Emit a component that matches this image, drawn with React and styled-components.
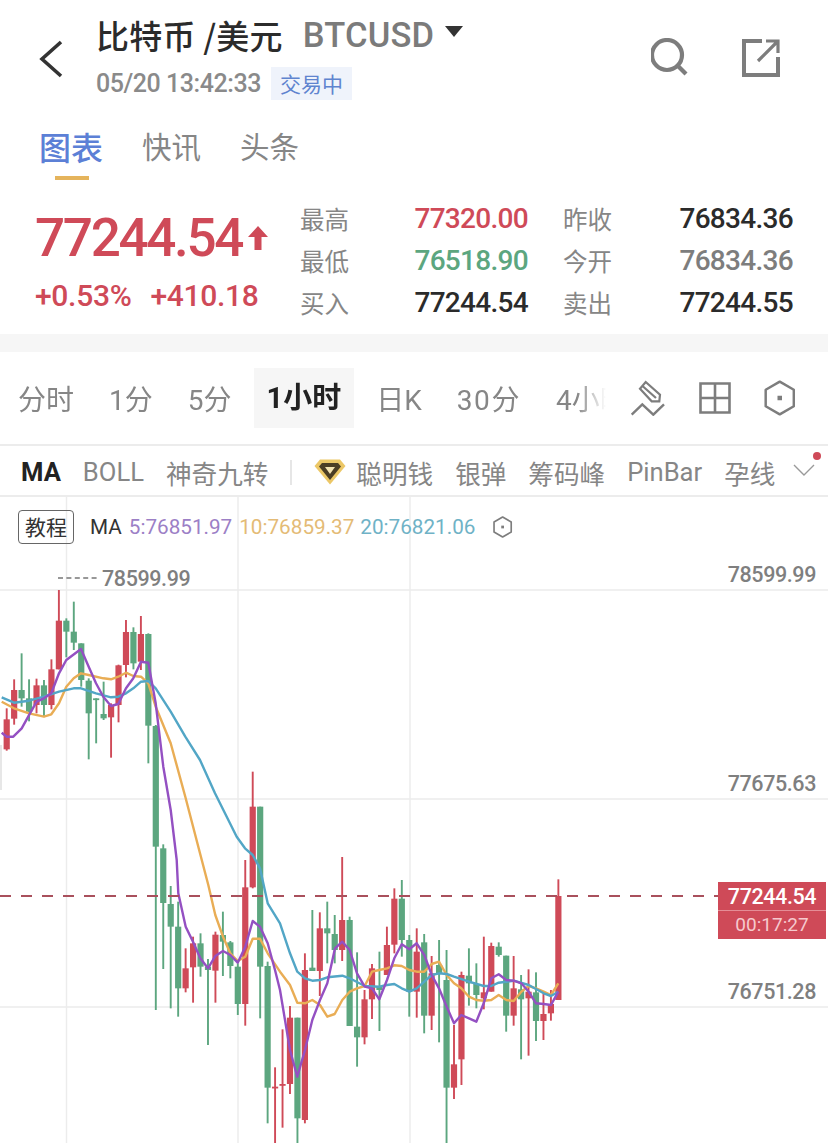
import React from 'react';
import styled, {createGlobalStyle} from 'styled-components';

const RED = '#cf4a58';
const GREEN = '#5ca67f';
const NUM = `Roboto, "Noto Sans CJK SC", sans-serif`;
const CJK = `"Noto Sans CJK SC", Roboto, sans-serif`;

const Global = createGlobalStyle`
	html, body {
		margin: 0;
		padding: 0;
		background: #fff;
	}
	* {
		box-sizing: border-box;
	}
`;

const Page = styled.div`
	width: 828px;
	height: 1143px;
	overflow: hidden;
	background: #fff;
	font-family: ${CJK};
	display: flex;
	flex-direction: column;
`;

const Header = styled.header`
	height: 129px;
	display: flex;
	align-items: flex-start;
	padding: 0 47px 0 39px;
`;
const BackIcon = styled.svg`
	width: 24px;
	height: 38px;
	margin-top: 40px;
	flex: none;
`;
const TitleBlock = styled.div`
	flex: 1;
	margin-left: 33px;
	padding-top: 12px;
	display: flex;
	flex-direction: column;
	gap: 10px;
`;
const TitleRow = styled.div`
	display: flex;
	align-items: center;
	height: 45px;
`;
const Title = styled.h1`
	margin: 0;
	font-size: 33px;
	font-weight: 500;
	color: #2b2b2b;
	white-space: nowrap;
	letter-spacing: 0.2px;
`;
const Symbol = styled.span`
	margin-left: 20px;
	font: 500 34.5px ${NUM};
	color: #7b7b7b;
	letter-spacing: 0.2px;
`;
const Caret = styled.i`
	margin: 0 0 6px 11px;
	width: 0;
	height: 0;
	border-left: 9px solid transparent;
	border-right: 9px solid transparent;
	border-top: 11px solid #333;
`;
const TimeRow = styled.div`
	display: flex;
	align-items: center;
	gap: 10px;
`;
const Time = styled.span`
	font: 500 25px ${NUM};
	color: #8a8a8a;
	white-space: nowrap;
	letter-spacing: -0.45px;
`;
const StatusTag = styled.span`
	width: 81px;
	height: 33px;
	background: #eff3fb;
	color: #5f84cf;
	font-size: 21px;
	line-height: 33px;
	text-align: center;
`;
const HeaderIcons = styled.div`
	display: flex;
	gap: 50px;
	margin-top: 38px;
`;
const IconSvg = styled.svg`
	display: block;
	flex: none;
`;

const Tabs = styled.nav`
	height: 53px;
	padding-left: 39px;
	display: flex;
	align-items: flex-start;
	gap: 39px;
`;
const Tab = styled.div`
	position: relative;
	font-size: ${({$active}) => ($active ? '32px' : '29.5px')};
	font-weight: ${({$active}) => ($active ? 500 : 400)};
	color: ${({$active}) => ($active ? '#5c80d6' : '#868686')};
	line-height: 34px;
	margin-top: ${({$active}) => ($active ? '0' : '-1px')};
	${({$active}) =>
		$active &&
		`&::after {
			content: '';
			position: absolute;
			left: 16px;
			top: 47px;
			width: 34px;
			height: 4px;
			background: #e5b45c;
		}`}
`;

const Quote = styled.section`
	height: 152px;
	display: flex;
	padding-left: 35px;
`;
const PriceBlock = styled.div`
	width: 265px;
	padding-top: 26px;
`;
const PriceRow = styled.div`
	display: flex;
	align-items: center;
	gap: 6px;
	height: 60px;
`;
const Price = styled.span`
	font: 500 53px ${NUM};
	color: ${RED};
	letter-spacing: -2.3px;
`;
const ChangeRow = styled.div`
	display: flex;
	gap: 19px;
	margin-top: 10px;
	font: 500 30px ${NUM};
	color: ${RED};
	letter-spacing: -0.3px;
`;
const Stats = styled.div`
	display: grid;
	grid-template-columns: 228px 230px;
	column-gap: 35px;
	grid-auto-rows: 42px;
	padding-top: 15px;
`;
const Stat = styled.div`
	display: flex;
	justify-content: space-between;
	align-items: center;
`;
const StatLabel = styled.span`
	font-size: 24.5px;
	color: #868686;
`;
const StatValue = styled.span`
	font: 500 28px ${NUM};
	color: ${({$color}) => $color || '#2b2b2b'};
	letter-spacing: -0.7px;
`;

const Gap = styled.div`
	height: 18px;
	background: #f6f6f6;
`;

const Periods = styled.div`
	height: 94px;
	display: flex;
	align-items: center;
	padding: 0 33px 0 18px;
	border-bottom: 2px solid #ececec;
`;
const PeriodScroll = styled.div`
	flex: 1;
	display: flex;
	align-items: center;
	gap: 35px;
	overflow: hidden;
	margin-right: 27px;
	-webkit-mask-image: linear-gradient(to right, #000 95%, transparent 100%);
	mask-image: linear-gradient(to right, #000 95%, transparent 100%);
`;
const Period = styled.span`
	flex: none;
	font-family: ${NUM};
	font-size: 28px;
	letter-spacing: ${({$track}) => $track || 0}px;
	color: #868686;
	white-space: nowrap;
`;
const ActivePeriod = styled(Period)`
	height: 60px;
	line-height: 60px;
	padding: 0 13px;
	margin: 0 -13px;
	background: #f6f6f6;
	color: #222;
	font-weight: 700;
	font-size: 29px;
`;
const Tools = styled.div`
	display: flex;
	align-items: center;
	gap: 31px;
	margin-left: -3px;
`;

const Indicators = styled.div`
	height: 51px;
	display: flex;
	align-items: center;
	gap: 22px;
	padding: 3px 0 0 21px;
	border-bottom: 2px solid #ececec;
	white-space: nowrap;
`;
const Indicator = styled.span`
	font-family: ${NUM};
	font-size: 25.6px;
	color: ${({$active}) => ($active ? '#222' : '#868686')};
	font-weight: ${({$active}) => ($active ? 700 : 400)};
`;
const Divider = styled.i`
	width: 2px;
	height: 25px;
	background: #e6e6e6;
`;
const SmartMoney = styled.div`
	display: flex;
	align-items: center;
	gap: 10px;
`;
const MoreButton = styled.div`
	position: relative;
	margin-left: -4px;
	width: 24px;
	height: 20px;
	&::after {
		content: '';
		position: absolute;
		right: -4px;
		top: -10px;
		width: 8px;
		height: 8px;
		border-radius: 50%;
		background: ${RED};
	}
`;

const Chart = styled.section`
	position: relative;
	flex: 1;
`;
const ChartSvg = styled.svg`
	position: absolute;
	inset: 0;
	display: block;
`;
const Legend = styled.div`
	position: absolute;
	left: 18px;
	top: 13px;
	display: flex;
	align-items: center;
`;
const GuideButton = styled.span`
	width: 56px;
	height: 34px;
	border: 1.5px solid #666;
	border-radius: 4px;
	font-size: 21px;
	line-height: 31px;
	text-align: center;
	color: #333;
`;
const LegendText = styled.span`
	font: 400 20.7px ${NUM};
	color: ${({$color}) => $color || '#333'};
	margin-left: ${({$gap}) => $gap}px;
	white-space: nowrap;
`;
const AxisLabel = styled.span`
	position: absolute;
	right: 12px;
	top: ${({$top}) => $top}px;
	font: 500 21.5px ${NUM};
	letter-spacing: -0.4px;
	color: #7f7f7f;
`;
const PeakLabel = styled(AxisLabel)`
	right: auto;
	left: 102px;
`;
const LastTag = styled.div`
	position: absolute;
	left: 718px;
	top: 385px;
	width: 108px;
	height: 57px;
	background: ${RED};
	display: flex;
	flex-direction: column;
	align-items: center;
	font-family: ${NUM};
`;
const LastPrice = styled.span`
	height: 29px;
	width: 100%;
	text-align: center;
	line-height: 29px;
	font-size: 21.5px;
	font-weight: 500;
	letter-spacing: -0.4px;
	color: #fff;
	border-bottom: 1px solid #e58d96;
`;
const Countdown = styled.span`
	line-height: 28px;
	font-size: 19px;
	color: #f6c9cd;
`;

// candles: colour, high, open/top, close/bottom, low, read off the chart at 3x
const CANDLES = [
	['r', 385, 418, 508, 512],
	['r', 298, 330, 416, 434],
	['g', 220, 330, 355, 380],
	['g', 298, 355, 395, 424],
	['r', 296, 316, 375, 400],
	['g', 300, 316, 375, 410],
	['r', 238, 268, 375, 388],
	['r', 30, 122, 268, 268],
	['g', 115, 122, 155, 232],
	['g', 65, 155, 188, 210],
	['g', 190, 190, 300, 320],
	['g', 295, 302, 400, 538],
	['g', 355, 355, 358, 490],
	['g', 305, 402, 415, 420],
	['r', 370, 375, 412, 533],
	['r', 254, 256, 375, 427],
	['r', 120, 156, 255, 292],
	['g', 142, 156, 250, 268],
	['r', 108, 162, 245, 270],
	['g', 160, 162, 437, 550],
	['g', 435, 438, 800, 1290],
	['g', 793, 805, 969, 1167],
	['g', 78, 132, 200, 445],
	['g', 125, 200, 385, 470],
	['r', 265, 325, 385, 397],
	['r', 230, 250, 322, 428],
	['g', 220, 250, 320, 350],
	['g', 297, 320, 330, 555],
	['r', 215, 224, 332, 428],
	['g', 155, 225, 245, 348],
	['g', 243, 247, 318, 355],
	['g', 310, 320, 432, 465],
	['r', 0, 82, 432, 497],
	['r', -265, -160, 82, 85],
	['g', -160, -160, 320, 475],
	['g', 305, 318, 683, 790],
	['r', 622, 680, 683, 860],
	['r', 508, 672, 677, 803],
	['r', 438, 473, 672, 702],
	['g', 473, 473, 775, 860],
	['r', 280, 330, 780, 790],
	['g', 150, 323, 333, 333],
	['r', 157, 205, 333, 408],
	['g', 125, 205, 220, 310],
	['g', 165, 222, 270, 310],
	['r', -9, 180, 270, 303],
	['g', 170, 180, 498, 498],
	['g', 277, 500, 532, 620],
	['r', 390, 418, 532, 553],
	['r', 312, 325, 418, 477],
	['g', 275, 380, 390, 513],
	['r', 200, 255, 345, 345],
	['r', 85, 116, 254, 280],
	['g', 60, 116, 240, 290],
	['g', 225, 240, 395, 470],
	['r', 205, 275, 395, 473],
	['g', 222, 247, 467, 520],
	['r', 288, 340, 467, 510],
	['g', 240, 315, 340, 547],
	['g', 270, 360, 683, 860],
	['r', 495, 613, 683, 717],
	['r', 335, 345, 598, 675],
	['g', 265, 347, 370, 437],
	['g', 310, 372, 405, 445],
	['r', 230, 397, 415, 448],
	['r', 248, 258, 395, 395],
	['g', 247, 260, 285, 290],
	['g', 287, 287, 467, 515],
	['r', 288, 385, 467, 497],
	['g', 345, 388, 418, 598],
	['r', 328, 395, 415, 587],
	['g', 337, 397, 483, 543],
	['r', 400, 462, 483, 540],
	['r', 390, 432, 460, 482],
	['r', 58, 108, 420, 420],
];

// line points in the same 3x units: [originX, originY, x, y, x, y...]
const toPoints = (sections) =>
	sections
		.flatMap(([ox, oy, ...pts]) => {
			const out = [];
			for (let i = 0; i < pts.length; i += 2) {
				out.push(`${(ox + pts[i] / 3).toFixed(1)},${(oy + pts[i + 1] / 3).toFixed(1)}`);
			}
			return out;
		})
		.join(' ');

const MA5 = toPoints([
	[0, 580, 5, 458, 20, 470, 40, 470, 65, 445, 90, 400, 110, 365, 132, 355, 154, 340, 177, 280, 199, 240, 243, 207, 266, 260, 288, 310, 310, 350, 333, 378, 355, 372, 378, 325, 400, 295, 423, 245, 445, 248, 467, 370, 490, 560, 512, 690, 530, 840],
	[0, 860, 535, 100, 557, 200, 579, 245, 601, 295, 624, 325, 646, 288, 669, 273, 691, 285, 713, 308, 736, 260, 758, 183, 780, 200, 803, 250, 825, 330],
	[280, 860, 0, 390, 30, 570, 52, 650, 75, 570, 97, 480, 120, 420, 142, 370, 165, 265, 187, 245, 209, 270, 231, 340, 254, 380, 276, 385, 298, 418, 321, 360, 343, 295, 365, 253, 388, 268, 410, 250, 433, 285, 455, 345, 477, 385, 500, 440, 522, 490, 544, 465, 567, 475, 589, 485, 611, 430, 634, 355, 656, 343, 679, 360, 701, 362, 724, 370, 746, 395, 768, 430, 791, 432, 813, 435, 835, 395],
]);
const MA10 = toPoints([
	[0, 580, 5, 365, 42, 385, 87, 400, 132, 410, 154, 403, 177, 370, 199, 320, 221, 295, 243, 280, 266, 285, 310, 295, 333, 298, 355, 290, 378, 278, 400, 288, 423, 290, 445, 310, 467, 380, 512, 490, 556, 650, 600, 820],
	[0, 860, 625, 75, 646, 165, 669, 230, 691, 280, 713, 303, 736, 290, 758, 236, 780, 236, 803, 280],
	[280, 860, 0, 335, 30, 375, 52, 428, 75, 430, 97, 420, 120, 435, 142, 470, 164, 462, 187, 420, 209, 395, 231, 385, 254, 378, 276, 335, 298, 330, 321, 325, 343, 316, 365, 318, 388, 330, 410, 335, 433, 335, 455, 312, 477, 305, 500, 345, 522, 370, 544, 385, 567, 410, 589, 420, 611, 422, 634, 420, 656, 405, 679, 420, 701, 423, 724, 395, 746, 378, 768, 385, 791, 395, 813, 405, 835, 370],
]);
const MA20 = toPoints([
	[0, 580, 5, 352, 42, 368, 87, 362, 132, 350, 177, 335, 221, 325, 243, 325, 288, 340, 333, 352, 355, 350, 378, 340, 400, 325, 423, 305, 445, 303, 467, 325, 512, 395, 556, 470, 600, 540, 645, 640, 710, 770, 735, 805, 758, 825, 780, 865],
	[0, 860, 803, 130],
	[280, 860, 0, 190, 30, 280, 52, 335, 75, 355, 97, 362, 120, 360, 142, 352, 187, 347, 209, 355, 254, 378, 298, 380, 321, 375, 343, 372, 365, 385, 388, 395, 410, 385, 433, 365, 455, 345, 477, 340, 500, 342, 522, 350, 567, 365, 611, 378, 634, 378, 656, 368, 701, 362, 746, 375, 791, 400, 813, 408, 835, 395],
]);

const Candles = () =>
	CANDLES.map(([c, hi, top, bot, lo], i) => {
		const base = i <= 21 ? 580 : 860;
		const x = 6.7 + i * 7.455;
		const color = c === 'r' ? RED : GREEN;
		const y = (v) => base + v / 3;
		return (
			<g key={i} fill={color}>
				<rect x={x - 0.95} y={y(hi)} width={1.9} height={Math.max(y(lo) - y(hi), 1)} />
				<rect x={x - 3.1} y={y(top)} width={6.2} height={Math.max(y(bot) - y(top), 1.8)} />
			</g>
		);
	});

const Hexagon = ({size = 32, stroke = 2.4}) => (
	<IconSvg width={size * 0.875} height={size} viewBox="0 0 28 32">
		<path d="M14 1.5 L26.5 8.7 V23.3 L14 30.5 L1.5 23.3 V8.7 Z" fill="none" stroke="#7d7d7d" strokeWidth={stroke} strokeLinejoin="round" />
		<rect x="12" y="14" width="4" height="4" fill="#7d7d7d" />
	</IconSvg>
);

const Gem = () => (
	<IconSvg width="32" height="26" viewBox="0 0 32 26">
		<path d="M6 0.5 H26 L31.5 7 L16 25.5 L0.5 7 Z" fill="#ecc766" />
		<path d="M8 4 H24 L27 7.5 L16 21 L5 7.5 Z" fill="#4b3d24" />
		<path d="M11 8 H21 L16 15 Z" fill="#f3e2b0" />
	</IconSvg>
);

const App = () => (
	<Page>
		<Global />
		<Header>
			<BackIcon viewBox="0 0 24 38">
				<path d="M22 2 L3 19 L22 36" fill="none" stroke="#333" strokeWidth="3.6" />
			</BackIcon>
			<TitleBlock>
				<TitleRow>
					<Title>比特币 /美元</Title>
					<Symbol>BTCUSD</Symbol>
					<Caret />
				</TitleRow>
				<TimeRow>
					<Time>05/20 13:42:33</Time>
					<StatusTag>交易中</StatusTag>
				</TimeRow>
			</TitleBlock>
			<HeaderIcons>
				<IconSvg width="40" height="40" viewBox="0 0 40 40">
					<circle cx="16" cy="17" r="15" fill="none" stroke="#7d7d7d" strokeWidth="4.2" />
					<path d="M27 28 L35 36" fill="none" stroke="#7d7d7d" strokeWidth="4.2" />
				</IconSvg>
				<IconSvg width="40" height="40" viewBox="0 0 40 40">
					<path d="M21 3 H3 V37 H37 V19" fill="none" stroke="#7d7d7d" strokeWidth="4" />
					<path d="M17 23 L37 3 M25 3 H37 V15" fill="none" stroke="#7d7d7d" strokeWidth="3.2" />
				</IconSvg>
			</HeaderIcons>
		</Header>

		<Tabs>
			<Tab $active>图表</Tab>
			<Tab>快讯</Tab>
			<Tab>头条</Tab>
		</Tabs>

		<Quote>
			<PriceBlock>
				<PriceRow>
					<Price>77244.54</Price>
					<IconSvg width="20" height="24" viewBox="0 0 20 24">
						<path d="M10 0 L20 11 H13.5 V24 H6.5 V11 H0 Z" fill={RED} />
					</IconSvg>
				</PriceRow>
				<ChangeRow>
					<span>+0.53%</span>
					<span>+410.18</span>
				</ChangeRow>
			</PriceBlock>
			<Stats>
				<Stat>
					<StatLabel>最高</StatLabel>
					<StatValue $color={RED}>77320.00</StatValue>
				</Stat>
				<Stat>
					<StatLabel>昨收</StatLabel>
					<StatValue>76834.36</StatValue>
				</Stat>
				<Stat>
					<StatLabel>最低</StatLabel>
					<StatValue $color={GREEN}>76518.90</StatValue>
				</Stat>
				<Stat>
					<StatLabel>今开</StatLabel>
					<StatValue $color="#7d7d7d">76834.36</StatValue>
				</Stat>
				<Stat>
					<StatLabel>买入</StatLabel>
					<StatValue>77244.54</StatValue>
				</Stat>
				<Stat>
					<StatLabel>卖出</StatLabel>
					<StatValue>77244.55</StatValue>
				</Stat>
			</Stats>
		</Quote>

		<Gap />

		<Periods>
			<PeriodScroll>
				<Period>分时</Period>
				<Period>1分</Period>
				<Period>5分</Period>
				<ActivePeriod>1小时</ActivePeriod>
				<Period>日K</Period>
				<Period $track={1.6}>30分</Period>
				<Period>4小时</Period>
			</PeriodScroll>
			<Tools>
				<IconSvg width="36" height="36" viewBox="0 0 36 36">
					<path d="M15.7 2 L30 14.7 L29.3 21.3 H21.7 L10 8.7 Z M12.5 6 L26 18" fill="none" stroke="#7d7d7d" strokeWidth="2.2" />
					<path d="M1.7 34.7 L12.3 24.3 L23.3 34.7 L34 24.3" fill="none" stroke="#7d7d7d" strokeWidth="2.4" />
				</IconSvg>
				<IconSvg width="36" height="36" viewBox="0 0 36 36">
					<path d="M3.5 3.5 H32.5 V32.5 H3.5 Z M18 3.5 V32.5 M3.5 18 H32.5" fill="none" stroke="#7d7d7d" strokeWidth="2.6" />
				</IconSvg>
				<Hexagon size={36} stroke={2.2} />
			</Tools>
		</Periods>

		<Indicators>
			<Indicator $active>MA</Indicator>
			<Indicator>BOLL</Indicator>
			<Indicator>神奇九转</Indicator>
			<Divider />
			<SmartMoney>
				<Gem />
				<Indicator>聪明钱</Indicator>
			</SmartMoney>
			<Indicator>银弹</Indicator>
			<Indicator>筹码峰</Indicator>
			<Indicator>PinBar</Indicator>
			<Indicator>孕线</Indicator>
			<MoreButton>
				<IconSvg width="24" height="20" viewBox="0 0 24 20">
					<path d="M1 3 L11 13 L21 3" fill="none" stroke="#9a9a9a" strokeWidth="1.4" />
				</IconSvg>
			</MoreButton>
		</Indicators>

		<Chart>
			<ChartSvg width="828" height="646" viewBox="0 497 828 646">
				<g stroke="#ececec" strokeWidth="1.4">
					<path d="M66.5 497 V1143 M238 497 V1143 M410 497 V1143" />
					<path d="M0 590 H828 M0 799 H828 M0 1007 H828" />
				</g>
				<path d="M1 745 V790" stroke="#ddd" strokeWidth="1.4" />
				<path d="M58 578 H98" stroke="#777" strokeWidth="1.6" strokeDasharray="5 3.4" />
				<Candles />
				<polyline points={MA10} fill="none" stroke="#e9ad55" strokeWidth="2.4" strokeLinejoin="round" />
				<polyline points={MA20} fill="none" stroke="#52a6c6" strokeWidth="2.4" strokeLinejoin="round" />
				<polyline points={MA5} fill="none" stroke="#9450c2" strokeWidth="2.4" strokeLinejoin="round" />
				<path d="M0 896 H718" stroke="#a9505c" strokeWidth="2" strokeDasharray="11 10" />
			</ChartSvg>
			<Legend>
				<GuideButton>教程</GuideButton>
				<LegendText $gap={16}>MA</LegendText>
				<LegendText $gap={7} $color="#9c80c6">5:76851.97</LegendText>
				<LegendText $gap={7} $color="#e4bb76">10:76859.37</LegendText>
				<LegendText $gap={6} $color="#6fb2c6">20:76821.06</LegendText>
				<LegendText $gap={18}>
					<Hexagon size={22} stroke={2.4} />
				</LegendText>
			</Legend>
			<PeakLabel $top={69}>78599.99</PeakLabel>
			<AxisLabel $top={65}>78599.99</AxisLabel>
			<AxisLabel $top={274}>77675.63</AxisLabel>
			<AxisLabel $top={482}>76751.28</AxisLabel>
			<LastTag>
				<LastPrice>77244.54</LastPrice>
				<Countdown>00:17:27</Countdown>
			</LastTag>
		</Chart>
	</Page>
);

export default App;
